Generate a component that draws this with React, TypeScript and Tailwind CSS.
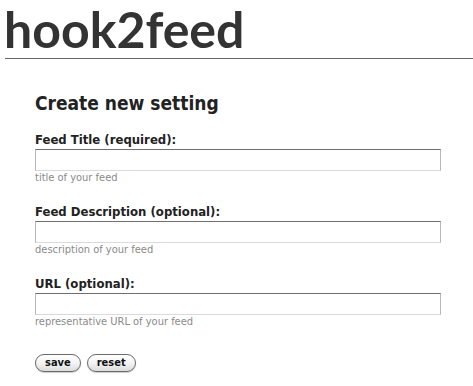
const fields = [
  { label: "Feed Title (required):", hint: "title of your feed" },
  { label: "Feed Description (optional):", hint: "description of your feed" },
  { label: "URL (optional):", hint: "representative URL of your feed" },
];

const Field = ({ label, hint }: { label: string; hint: string }) => {
  return (
    <div className="mb-[19px]">
      <label className="block text-[13px] font-bold leading-[16px] text-[#222]">{label}</label>
      <input
        type="text"
        className="mt-[1px] block h-[22px] w-[406px] border border-t-[#6f6f6f] border-l-[#b8b8b8] border-r-[#b8b8b8] border-b-[#dadada] bg-white outline-none"
      />
      <p className="text-[11px] leading-[14px] text-[#8a8a8a]">{hint}</p>
    </div>
  );
};

const Button = ({ children }: { children: string }) => (
  <button className="h-[18px] rounded-full border border-[#6a6a6a] bg-gradient-to-b from-white via-[#f4f4f4] to-[#dcdcdc] px-[9px] text-[11px] font-bold leading-[16px] text-[#111] shadow-[0_1px_1px_rgba(0,0,0,0.2)]">
    {children}
  </button>
);

export default function App() {
  return (
    <div className="min-h-[386px] bg-white font-['DejaVu_Sans_Condensed','DejaVu_Sans',sans-serif] text-[#333]">
      <h1 className="pl-[4px] font-['Lato',sans-serif] text-[50px] font-bold leading-[58px] text-[#333]">hook2feed</h1>
      <hr className="ml-[5px] border-t border-[#666]" />
      <form className="px-[35px] pt-[32px]">
        <h2 className="mb-[17px] text-[19px] font-bold leading-[24px] text-[#222]">Create new setting</h2>
        {fields.map((f) => (
          <Field key={f.label} label={f.label} hint={f.hint} />
        ))}
        <div className="mt-[25px] flex gap-[6px]">
          <Button>save</Button>
          <Button>reset</Button>
        </div>
      </form>
    </div>
  );
}
